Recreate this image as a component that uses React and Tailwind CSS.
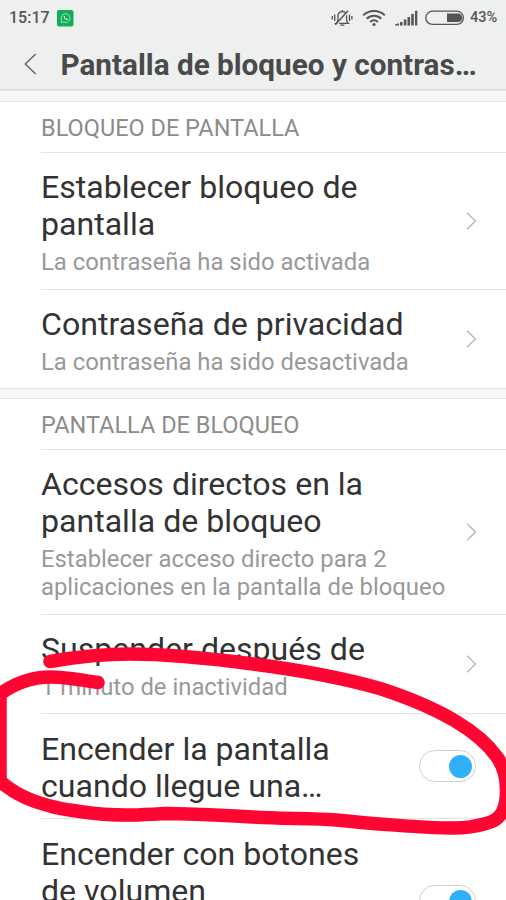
import clsx from 'clsx'

const lockRows = [
  {
    title: ['Establecer bloqueo de', 'pantalla'],
    summary: ['La contraseña ha sido activada'],
    height: 'h-[137px]',
  },
  {
    title: ['Contraseña de privacidad'],
    summary: ['La contraseña ha sido desactivada'],
    height: 'h-[98px]',
  },
]

const screenRows = [
  {
    title: ['Accesos directos en la', 'pantalla de bloqueo'],
    summary: ['Establecer acceso directo para 2', 'aplicaciones en la pantalla de bloqueo'],
    height: 'h-[165px]',
  },
  {
    title: ['Suspender después de'],
    summary: ['1 minuto de inactividad'],
    height: 'h-[99px]',
  },
  {
    title: ['Encender la pantalla', 'cuando llegue una…'],
    toggle: true,
    height: 'h-[105px]',
  },
  {
    title: ['Encender con botones', 'de volumen'],
    toggle: true,
    height: 'h-[164px]',
  },
]

function StatusBar() {
  return (
    <div className="flex h-[36px] items-center pl-[9px] text-[#555]">
      <span className="w-[48px] text-[16px] font-medium leading-none whitespace-nowrap">15:17</span>
      <svg className="-ml-[0.5px]" width="17" height="17" viewBox="0 0 17 17" fill="none">
        <rect width="16.5" height="16.5" rx="2" fill="#12ad58" />
        <path d="M4 12.6l.7-2.3a4.4 4.4 0 1 1 1.7 1.7z" stroke="#b9ebcb" strokeWidth="0.8" />
        <path d="M6.8 6.2c-.5 1.800 1.600 4 3.600 3.900l.6-1-1.300-.8-.7.6c-.6-.3-1-.8-1.200-1.300l.5-.6-.6-1.200z" fill="#d4f3df" />
      </svg>
      <div className="ml-auto flex items-center">
        {/* muted bell */}
        <svg width="22" height="18" viewBox="0 0 22 18" fill="none" stroke="#555" strokeWidth="1.300">
          <path d="M5 14.300H17.300c-1.200-1-1.700-2-1.700-3.500V7c0-2.600-1.700-4.400-4.300-4.400S7 4.400 7 7v3.800c0 1.500-.5 2.500-2 3.500z" />
          <path d="M11.300 1v1.600M9.300 16.200h4" />
          <path d="M5.600 16L18.300 2" stroke="#edf0ef" strokeWidth="1.300" />
          <path d="M4.300 15.800L17 1.800" strokeWidth="1.500" />
          <path d="M3.700 5.500v6.500M1.300 7v3.500M18.500 5.500v6.500M20.900 7v3.500" />
        </svg>
        <svg className="ml-[9px]" width="24" height="18" viewBox="0 0 24 18" fill="none" stroke="#555" strokeWidth="2">
          <path d="M1.200 6.400c6-5.800 15.600-5.800 21.600 0M4.700 9.700c4.200-3.900 10.400-3.900 14.600 0M8.100 12.900c2.300-2 5.500-2 7.800 0" />
          <circle cx="12" cy="15.500" r="1.600" fill="#555" stroke="none" />
        </svg>
        <svg className="ml-[9px]" width="23" height="16" viewBox="0 0 23 16" fill="#555">
          <path d="M0 15.500v-1l4-1.200v2.200zM5 12h2.600v3.500H5zM8.800 9.500h2.600v6H8.800zM12.500 7h2.600v8.500h-2.600zM16.200 4h2.600v11.500h-2.600zM20 .7h2.300v14.800H20z" />
        </svg>
        <svg className="ml-[7px]" width="40" height="16" viewBox="0 0 40 16" fill="none">
          <rect x="0.800" y="1.200" width="37.600" height="13.200" rx="6.600" stroke="#555" strokeWidth="1.300" />
          <path d="M22 3.500h11a4.300 4.300 0 0 1 0 8.600H22z" fill="#555" />
        </svg>
        <span className="ml-[5px] w-[36px] text-[14.500px] font-medium leading-none whitespace-nowrap">43%</span>
      </div>
    </div>
  )
}

function Header() {
  return (
    <header className="h-[91px] border-b-2 border-[#dfe1e1] bg-[#edf0ef]">
      <StatusBar />
      <div className="flex h-[56px] items-center pl-[24px]">
        <svg width="13" height="22" viewBox="0 0 13 22" fill="none" stroke="#666" strokeWidth="1.500">
          <path d="M11.700 1L1.300 11l10.400 10" />
        </svg>
        <h1 className="ml-[23.5px] pt-px text-[29.7px] font-bold leading-none whitespace-nowrap text-[#4a4a4a]">
          Pantalla de bloqueo y contras…
        </h1>
      </div>
    </header>
  )
}

function Toggle() {
  return (
    <div className="flex h-[32px] w-[57px] items-center justify-end rounded-full border border-[#d0d0d0] bg-white pr-[3.500px]">
      <div className="size-[23px] rounded-full bg-[#30b0fa]" />
    </div>
  )
}

function Row({ row, last }) {
  return (
    <div className={clsx('ml-[41px] flex shrink-0 items-center', row.height, !last && 'border-b border-[#e4e4e4]')}>
      <div className={clsx('grow self-start whitespace-nowrap', row.toggle ? 'pt-[17px]' : 'pt-[16px]')}>
        <div className="text-[32.1px] leading-[37px] text-[#333]">
          {row.title.map((line) => <div key={line}>{line}</div>)}
        </div>
        {row.summary && (
          <div className="pt-[5px] text-[23.85px] leading-[28px] text-[#999]">
            {row.summary.map((line) => <div key={line}>{line}</div>)}
          </div>
        )}
      </div>
      {row.toggle ? (
        <div className="mr-[30px]"><Toggle /></div>
      ) : (
        <svg className="mr-[29.5px] shrink-0" width="11" height="18" viewBox="0 0 11 18" fill="none" stroke="#b5b5b5" strokeWidth="1.300">
          <path d="M1 .7L9.500 9 1 17.300" />
        </svg>
      )}
    </div>
  )
}

function Section({ label, rows }) {
  return (
    <section>
      <h2 className="ml-[41px] flex h-[51px] items-center border-b border-[#e4e4e4] pt-[3px] text-[23.5px] leading-none text-[#8c8c8c]">
        {label}
      </h2>
      {rows.map((row, i) => (
        <Row key={row.title[0]} row={row} last={i === rows.length - 1} />
      ))}
    </section>
  )
}

// hand drawn circle around the "Encender la pantalla" option
function Marker() {
  return (
    <svg className="pointer-events-none absolute inset-0" width="506" height="900" viewBox="0 0 506 900" fill="none">
      <path
        d="M50 661.500C82 656 105 654 130 654C170 654 215 659 253 664C300 670 350 680 380 688.500C406 697 432 707 456 721.500C472 731 487 743 497 757C504 767 506.500 778 506.500 790C506.500 808 502 820 486 823.500C476 826.500 466 828 453 828C425 828 365 823 336 820C310 818 280 819 253 817C220 815 195 814 167 813.500C153 814 140 815 127 815C110 815 96 814 83 812C70 810 60 809 50 806C30 801 12 792 0 781V694C14 684 30 677 50 677C68 677 80 680 98 682.500"
        stroke="#ff0632"
        strokeWidth="13.5"
        strokeLinecap="round"
        strokeLinejoin="round"
      />
    </svg>
  )
}

export default function App() {
  return (
    <div className="relative h-[900px] w-[506px] overflow-hidden bg-white font-['Roboto',sans-serif]">
      <Header />
      <div className="h-[11px] border-b border-[#e6e6e6] bg-[#f7f7f7]" />
      <Section label="BLOQUEO DE PANTALLA" rows={lockRows} />
      <div className="h-[11px] border-y border-[#e6e6e6] bg-[#f7f7f7]" />
      <Section label="PANTALLA DE BLOQUEO" rows={screenRows} />
      <Marker />
    </div>
  )
}
